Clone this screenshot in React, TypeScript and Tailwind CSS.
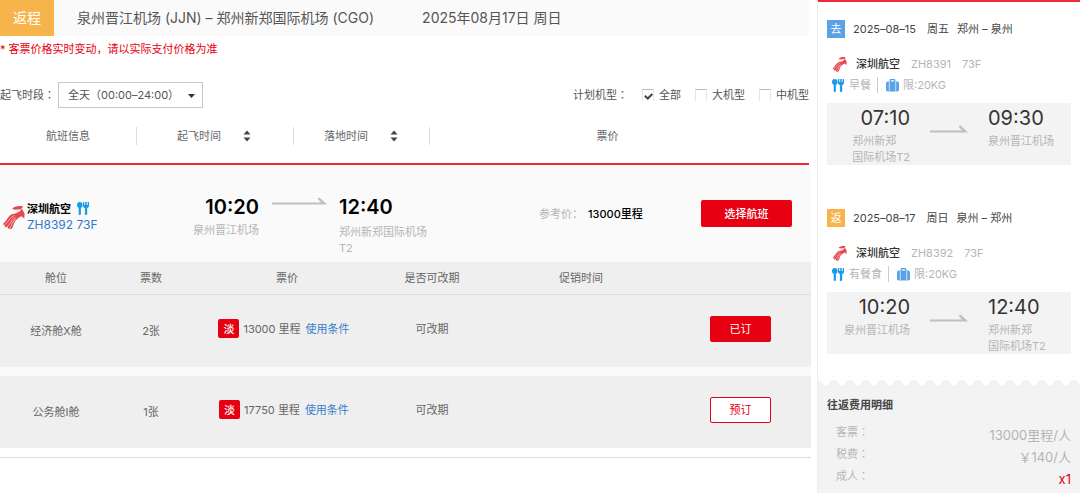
import React, { useState } from "react";

interface Cabin {
  name: string;
  left: number;
  price: number;
  booked: boolean;
}

interface Segment {
  tag: string;
  tagColor: string;
  date: string;
  week: string;
  route: string;
  flightNo: string;
  meal: string;
  depTime: string;
  depAirport: string[];
  arrTime: string;
  arrAirport: string[];
}

const cabins: Cabin[] = [
  { name: "经济舱X舱", left: 2, price: 13000, booked: true },
  { name: "公务舱I舱", left: 1, price: 17750, booked: false },
];

const segments: Segment[] = [
  {
    tag: "去",
    tagColor: "bg-[#5aa2e8]",
    date: "2025–08–15",
    week: "周五",
    route: "郑州 – 泉州",
    flightNo: "ZH8391",
    meal: "早餐",
    depTime: "07:10",
    depAirport: ["郑州新郑", "国际机场T2"],
    arrTime: "09:30",
    arrAirport: ["泉州晋江机场"],
  },
  {
    tag: "返",
    tagColor: "bg-[#f8b44c]",
    date: "2025–08–17",
    week: "周日",
    route: "泉州 – 郑州",
    flightNo: "ZH8392",
    meal: "有餐食",
    depTime: "10:20",
    depAirport: ["泉州晋江机场"],
    arrTime: "12:40",
    arrAirport: ["郑州新郑", "国际机场T2"],
  },
];

const planeTypes = ["全部", "大机型", "中机型"];

// the TC face centres the full width colon in its box
function Colon() {
  return (
    <span lang="zh-TW" className="font-['Noto_Sans_CJK_TC',sans-serif] leading-none">
      ：
    </span>
  );
}

function AirlineLogo({ className }: { className: string }) {
  return (
    <svg className={className} viewBox="0 0 24 26" fill="none" aria-hidden="true">
      <path d="M10.500 4.500C13 1.500 18 1 22 2l-2 3-6.500.5z" fill="#e5484d" />
      <path
        d="M13 9.500C17 9 19 6.500 21 4.500l2.600 5-.4 5-3.200-2.200C17.500 14 15.500 15 14 17c-2 3-1.800 5.800-4 8.500L6.500 25l-1-1.800-2.500.4-.3-2.200L.8 20.500C5 17 6 13 9.500 10.500z"
        fill="#e5484d"
      />
      <path
        d="M2.500 21.500C7 18 8 13.500 13 11.500M5 23.500c4.500-3 4.500-8 9-10M8 24.500c3.200-3.300 2.800-7.500 6.500-9.500M15 7.500c2 .2 3-.4 4-1.500"
        stroke="#fbd5d5"
        strokeWidth="0.8"
      />
    </svg>
  );
}

function MealIcon() {
  return (
    <svg className="h-[13px] w-3 shrink-0" viewBox="0 0 12 13" aria-hidden="true">
      <ellipse cx="2.800" cy="3" rx="2.800" ry="3" fill="#1b9be8" />
      <rect x="1.700" y="4" width="2.200" height="9" rx="1" fill="#1b9be8" />
      <path d="M6 0h1.300v3h.9V0h1.600v3h.9V0H12v3.800c0 1.300-.7 2-1.800 2.300V12c0 1.300-2.300 1.300-2.300 0V6.100C6.700 5.800 6 5.100 6 3.800z" fill="#1b9be8" />
    </svg>
  );
}

function BagIcon() {
  return (
    <svg className="h-[13px] w-[13px] shrink-0" viewBox="0 0 13 13" aria-hidden="true">
      <path d="M4.200 3V1.300c0-.5.3-.7.7-.7h3.200c.4 0 .7.2.7.700V3" fill="none" stroke="#4c9be8" strokeWidth="1.100" />
      <rect y="2.600" width="13" height="10" rx="1.800" fill="#5aa2e8" />
      <path d="M3.300 2.600v10M9.700 2.600v10" stroke="#d5e8fa" strokeWidth="0.9" />
    </svg>
  );
}

function Arrow({ className }: { className: string }) {
  return (
    <svg className={className} viewBox="0 0 55 8" preserveAspectRatio="xMaxYMax slice" aria-hidden="true">
      <path d="M0 5.500h49L45.500 1.500 47.500 .5 55 7.500H0z" fill="#bfbfbf" />
    </svg>
  );
}

function SortButton({ label }: { label: string }) {
  return (
    <button type="button" aria-label={label} className="flex cursor-pointer">
      <svg className="h-3 w-2" viewBox="0 0 8 12" aria-hidden="true">
        <path d="M4 .5l3.500 4h-7zM4 11.500l3.500-4h-7z" fill="#444" />
      </svg>
    </button>
  );
}

function SegmentCard({ segment }: { segment: Segment }) {
  return (
    <section className="px-[9px]">
      <div className="flex items-center gap-2 text-[#444]">
        <span className={`flex size-[18px] items-center justify-center text-white ${segment.tagColor}`}>
          {segment.tag}
        </span>
        <span>{segment.date}</span>
        <span className="ml-[3px]">{segment.week}</span>
        <span>{segment.route}</span>
      </div>
      <div className="mt-[18px] flex h-4 items-center pl-[5px] text-[#b5b5b5]">
        <AirlineLogo className="h-4 w-[15px]" />
        <span className="ml-[9px] font-medium text-[#333]">深圳航空</span>
        <span className="ml-[11px]">{segment.flightNo}</span>
        <span className="ml-[11px]">73F</span>
      </div>
      <div className="mt-[5px] flex h-4 items-center pl-[5px] text-[#b5b5b5]">
        <MealIcon />
        <span className="ml-[5px]">{segment.meal}</span>
        <span className="mx-[6px] h-4 border-l border-[#ccc]" />
        <span className="ml-[2px]">
          <BagIcon />
        </span>
        <span className="ml-1">限:20KG</span>
      </div>
      <div className="mt-[10px] flex min-h-[62px] bg-[#f3f3f3] leading-4 text-[#b5b5b5]">
        <div className="flex w-[83px] flex-col items-end">
          <p className="text-[20px] leading-[30px] text-[#333]">{segment.depTime}</p>
          <p>
            {segment.depAirport.map((line) => (
              <span className="block" key={line}>{line}</span>
            ))}
          </p>
        </div>
        <Arrow className="mx-5 mt-[22px] h-2 w-[38px]" />
        <div>
          <p className="text-[20px] leading-[30px] text-[#333]">{segment.arrTime}</p>
          <p>
            {segment.arrAirport.map((line) => (
              <span className="block" key={line}>{line}</span>
            ))}
          </p>
        </div>
      </div>
    </section>
  );
}

export default function App() {
  const [checked, setChecked] = useState<string[]>(["全部"]);

  const toggle = (type: string) =>
    setChecked((prev) =>
      prev.includes(type) ? prev.filter((t) => t !== type) : [...prev, type]
    );

  return (
    <div
      lang="zh-CN"
      className="flex min-h-screen bg-white font-['Inter','Noto_Sans_CJK_SC',sans-serif] text-[11px] leading-4 text-[#555]"
    >
      <main className="min-w-0 flex-1 pr-[6px]">
        <div className="pr-[2px]">
          <header className="flex h-9 items-center bg-[#fafafa] text-[14px] leading-5 text-[#555]">
            <span className="flex h-full w-[54px] items-center justify-center bg-[#f8b44c] text-white">
              返程
            </span>
            <h1 className="ml-[23px]">泉州晋江机场 (JJN) – 郑州新郑国际机场 (CGO)</h1>
            <p className="ml-12">2025年08月17日 周日</p>
          </header>
          <p className="flex h-[26px] items-center text-[#e60012]">
            * 客票价格实时变动，请以实际支付价格为准
          </p>
          <div className="mt-5 flex items-center">
            <label htmlFor="period">
              起飞时段
              <Colon />
            </label>
            <div className="relative ml-[3px]">
              <select
                id="period"
                className="h-[26px] w-[145px] appearance-none border border-[#c8c8c8] bg-white pl-[9px] text-[#555]"
              >
                <option>全天（00:00–24:00）</option>
              </select>
              <svg className="pointer-events-none absolute right-2 top-3 h-1 w-[7px]" viewBox="0 0 7 4" aria-hidden="true">
                <path d="M0 0h7L3.500 4z" fill="#333" />
              </svg>
            </div>
            <div className="ml-auto flex items-center gap-[14px]">
              <span>
                计划机型
                <Colon />
              </span>
              {planeTypes.map((type) => (
                <label key={type} className="flex items-center gap-[5px]">
                  <span className="relative flex">
                    <input
                      type="checkbox"
                      checked={checked.includes(type)}
                      onChange={() => toggle(type)}
                      className="peer size-3 appearance-none border border-b-0 border-[#e5e5e5] border-t-[#bbb] bg-white"
                    />
                    <svg
                      className="pointer-events-none absolute left-[2px] top-1 hidden h-[7px] w-[9px] peer-checked:block"
                      viewBox="0 0 9 7"
                      aria-hidden="true"
                    >
                      <path d="M.8 2.800l3 2.700L8.300 1" fill="none" stroke="#444" strokeWidth="2" />
                    </svg>
                  </span>
                  {type}
                </label>
              ))}
            </div>
          </div>
          <div className="grid h-[57px] grid-cols-[136fr_157fr_136fr_380fr] items-center border-b-2 border-[#f0293a] text-[#666]">
            <div className="text-center">航班信息</div>
            <div className="flex h-[18px] items-center gap-[22px] border-l border-[#ddd] pl-10">
              起飞时间
              <SortButton label="按起飞时间排序" />
            </div>
            <div className="flex h-[18px] items-center gap-[22px] border-l border-[#ddd] pl-[30px]">
              落地时间
              <SortButton label="按落地时间排序" />
            </div>
            <div className="flex h-[18px] items-center justify-center border-l border-[#ddd] pr-6">票价</div>
          </div>
        </div>

        <div className="grid min-h-[97px] grid-cols-[136fr_123fr_80fr_200fr_133fr_139fr] bg-[#fafafa] text-[#b5b5b5]">
          <div className="flex items-center gap-[2px] pl-[2px] pt-[6px]">
            <AirlineLogo className="h-[26px] w-[23px] shrink-0" />
            <div className="text-black">
              <p className="flex items-center gap-[6px] font-bold">
                深圳航空
                <MealIcon />
              </p>
              <p className="text-[12px] text-[#2f78cc]">ZH8392 73F</p>
            </div>
          </div>
          <div className="pt-[30px] text-right">
            <p className="text-[20px] font-semibold leading-6 text-black">10:20</p>
            <p className="mt-[3px]">泉州晋江机场</p>
          </div>
          <div className="flex justify-center pt-8">
            <Arrow className="h-2 w-[55px]" />
          </div>
          <div className="pt-[30px]">
            <p className="text-[20px] font-semibold leading-6 text-black">12:40</p>
            <p className="mt-[5px]">
              郑州新郑国际机场
              <br />
              T2
            </p>
          </div>
          <div className="flex items-center gap-[5px]">
            <span>参考价：</span>
            <span className="font-medium text-black">13000里程</span>
          </div>
          <div className="flex items-center justify-end pr-[19px]">
            <button type="button" className="h-[27px] w-[91px] rounded-[2px] bg-[#e60012] font-medium text-white">
              选择航班
            </button>
          </div>
        </div>

        <div className="border-b border-[#ddd] pb-[9px]">
          <table className="w-full table-fixed border-separate border-spacing-0 text-center text-[#666]">
            <colgroup>
              <col className="w-[112px]" />
              <col className="w-[78px]" />
              <col className="w-[194px]" />
              <col className="w-[96px]" />
              <col className="w-[202px]" />
              <col className="w-[129px]" />
            </colgroup>
            <thead>
              <tr className="bg-[#efefef]">
                {["舱位", "票数", "票价", "是否可改期", "促销时间", ""].map((title) => (
                  <th key={title} scope="col" className="h-[33px] border-b border-[#ddd] font-normal">
                    {title}
                  </th>
                ))}
              </tr>
            </thead>
            {cabins.map((cabin, index) => (
              <tbody key={cabin.name}>
                {index > 0 && (
                  <tr>
                    <td colSpan={6} className="h-[9px] bg-[#fafafa]"></td>
                  </tr>
                )}
                <tr className="bg-[#efefef]">
                  <td className="h-[72px]">{cabin.name}</td>
                  <td>{cabin.left}张</td>
                  <td className="pb-[5px] pr-[6px]">
                    <div className="flex items-center justify-center gap-1">
                      <span className="flex h-[19px] w-[21px] items-center justify-center rounded-[2px] bg-[#e60012] font-medium text-white">
                        淡
                      </span>
                      <span>{cabin.price} 里程</span>
                      <a href="#rules" className="ml-[1px] text-[#3a80cc]">
                        使用条件
                      </a>
                    </div>
                  </td>
                  <td className="pb-[5px]">可改期</td>
                  <td></td>
                  <td className="pb-[5px] pr-3">
                    <button
                      type="button"
                      className={`h-[26px] w-[61px] rounded-[2px] border border-[#e60012] ${
                        cabin.booked ? "bg-[#e60012] text-white" : "bg-white text-[#e60012]"
                      }`}
                    >
                      {cabin.booked ? "已订" : "预订"}
                    </button>
                  </td>
                </tr>
              </tbody>
            ))}
          </table>
        </div>
      </main>

      <aside className="flex w-[263px] shrink-0 flex-col border-l border-[#eee]">
        <div className="flex flex-col gap-11 border-t-2 border-[#f0293a] pb-[26px] pt-[18px]">
          {segments.map((segment) => (
            <SegmentCard key={segment.tag} segment={segment} />
          ))}
        </div>
        <svg className="block h-[6px] w-full" aria-hidden="true">
          <pattern id="scallop" width="16" height="6" patternUnits="userSpaceOnUse">
            <path d="M0 0c3 0 5 2 5.500 5h5C11 2 13 0 16 0v6H0z" fill="#f3f3f3" />
          </pattern>
          <rect width="100%" height="6" fill="url(#scallop)" />
        </svg>
        <div className="flex-1 bg-[#f3f3f3] px-[9px] pt-[11px]">
          <h2 className="font-bold text-[#444]">往返费用明细</h2>
          <dl className="mt-[11px] pl-[9px] text-[#b5b5b5]">
            <div className="flex h-[22px] justify-between">
              <dt>客票<Colon /></dt>
              <dd className="text-[13px] leading-[22px]">13000里程/人</dd>
            </div>
            <div className="flex h-[22px] justify-between">
              <dt>税费<Colon /></dt>
              <dd className="text-[13px] leading-[22px]">￥140/人</dd>
            </div>
            <div className="flex h-[22px] justify-between">
              <dt>成人<Colon /></dt>
              <dd className="text-[13px] leading-[22px] text-[#e60012]">x1</dd>
            </div>
          </dl>
        </div>
      </aside>
    </div>
  );
}
